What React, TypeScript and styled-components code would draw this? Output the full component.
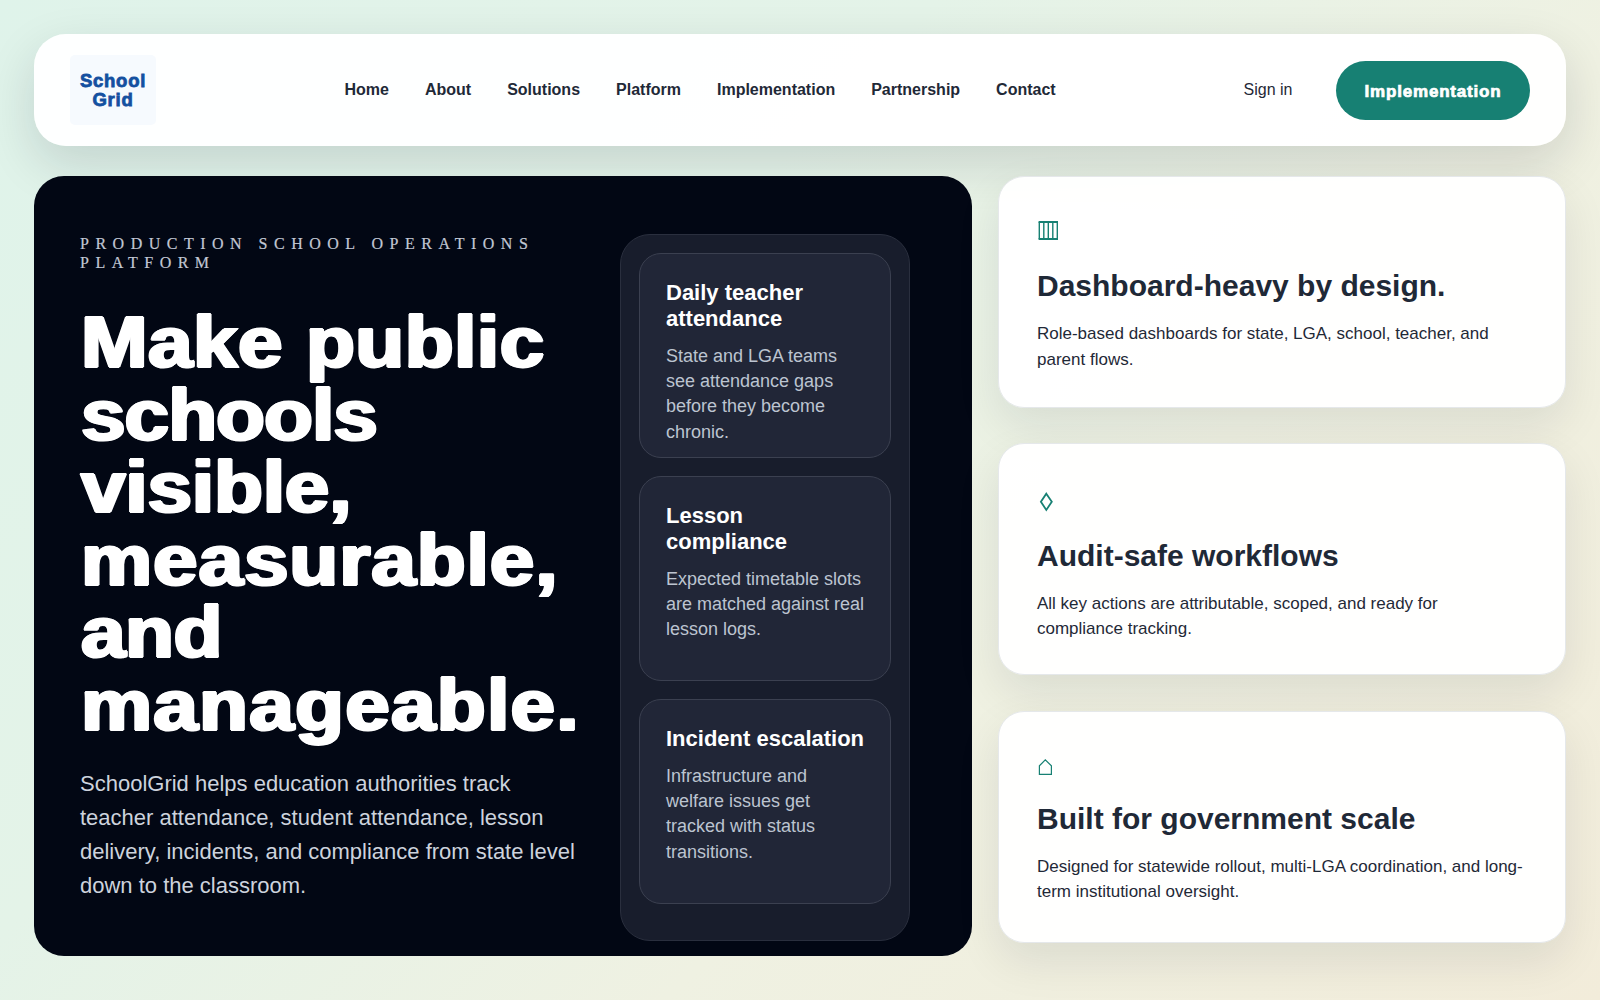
import React from 'react';
import styled, { createGlobalStyle } from 'styled-components';

const sans = '"Liberation Sans", Arial, sans-serif';

const GlobalStyle = createGlobalStyle`
  *, *::before, *::after { box-sizing: border-box; }
  body {
    margin: 0;
    font-family: ${sans};
    color: #1f2937;
  }
  h1, h2, h3, p { margin: 0; }
`;

const Page = styled.div`
  width: 1600px;
  height: 1000px;
  overflow: hidden;
  padding: 34px;
  background: linear-gradient(135deg, #dff3ea 0%, #e4f3e8 36%, #eff1e2 64%, #f2ecda 100%);
`;

const Header = styled.header`
  display: flex;
  align-items: center;
  height: 112px;
  padding: 0 36px;
  border-radius: 32px;
  background: rgba(255, 255, 255, 0.97);
  box-shadow: 0 18px 50px rgba(15, 23, 42, 0.14);
`;

const Logo = styled.a`
  display: flex;
  align-items: center;
  justify-content: center;
  width: 86px;
  height: 70px;
  border-radius: 5px;
  background: #f6fafe;
  color: #1450a0;
  font: 700 18.5px/19px ${sans};
  letter-spacing: 0.75px;
  -webkit-text-stroke: 0.8px #1450a0;
  text-align: center;
`;

const Nav = styled.nav`
  display: flex;
  gap: 36px;
  margin-left: 188.5px;
`;

const NavLink = styled.a`
  font-size: 16px;
  font-weight: 700;
  line-height: 18px;
`;

const SignIn = styled.a`
  margin-left: auto;
  font-size: 16px;
  line-height: 18px;
`;

const CtaButton = styled.a`
  display: flex;
  align-items: center;
  justify-content: center;
  width: 194px;
  height: 59px;
  margin: 1px 0 0 43.5px;
  padding-top: 2px;
  border-radius: 30px;
  background: #178073;
  color: #fff;
  font: 700 17px/20px ${sans};
  letter-spacing: 0.8px;
  -webkit-text-stroke: 0.7px #fff;
`;

const Main = styled.main`
  display: grid;
  grid-template-columns: 938px 568px;
  column-gap: 26px;
  margin-top: 30px;
  height: 780px;
`;

const Hero = styled.section`
  display: flex;
  align-items: flex-start;
  justify-content: space-between;
  padding: 58px 62px 0 46px;
  border-radius: 30px;
  background: #020714;
`;

const HeroCopy = styled.div`
  width: 510px;
`;

const Eyebrow = styled.p`
  width: 480px;
  color: #c2c8d4;
  font: 400 16px/19px "Liberation Serif", "Times New Roman", serif;
  letter-spacing: 6.5px;
  -webkit-text-stroke: 0.2px #c2c8d4;
`;

const Headline = styled.h1`
  margin-top: 34px;
  color: #fff;
  font-size: 72.5px;
  font-weight: 700;
  line-height: 72.6px;
  -webkit-text-stroke: 2px #fff;
  text-shadow: 1.7px 0 #fff, -1.7px 0 #fff;
  transform: scaleX(1.1);
  transform-origin: left top;
`;

const HeadlineLine = styled.span<{ $spacing: number }>`
  display: block;
  padding-left: 1px;
  letter-spacing: ${({ $spacing }) => $spacing}px;
  white-space: nowrap;
`;

const Lead = styled.p`
  margin-top: 25px;
  color: #cdd3dd;
  font-size: 22px;
  line-height: 34px;
  width: 500px;
`;

const Panel = styled.aside`
  display: flex;
  flex-direction: column;
  gap: 18px;
  width: 290px;
  height: 707px;
  padding: 18px;
  border: 1px solid #2a2f3e;
  border-radius: 30px;
  background: #181d2c;
`;

const PanelCard = styled.article`
  height: 205px;
  padding: 26px 24px 0 26px;
  border: 1px solid #3b4050;
  border-radius: 22px;
  background: #212637;
`;

const PanelTitle = styled.h3`
  color: #fff;
  font-size: 22px;
  line-height: 26px;
`;

const PanelText = styled.p`
  margin-top: 12px;
  color: #bcc4d0;
  font-size: 18px;
  line-height: 25.2px;
`;

const Features = styled.div`
  display: flex;
  flex-direction: column;
  gap: 35.4px;
`;

const FeatureCard = styled.article`
  height: 232px;
  padding: 36px 38px 0 38px;
  border: 1px solid #e5e8ea;
  border-radius: 26px;
  background: rgba(255, 255, 255, 0.97);
  box-shadow: 0 18px 45px rgba(15, 23, 42, 0.09);
`;

const IconSlot = styled.div<{ $height: number; $top: number }>`
  height: ${({ $height }) => $height}px;
  padding-top: ${({ $top }) => $top}px;
  color: #178073;
  svg { display: block; }
`;

const FeatureTitle = styled.h2`
  font-size: 30px;
  line-height: 34px;
`;

const FeatureText = styled.p`
  max-width: 488px;
  margin-top: 18px;
  font-size: 17px;
  line-height: 25.5px;
`;

const ColumnsIcon = () => (
  <svg width="22" height="20" viewBox="0 0 22 20" fill="none" stroke="currentColor">
    <path d="M1.6 1h19.4M1.6 18h19.4" strokeWidth="2" />
    <path d="M2.3 1v17M6.8 1v17M11.3 1v17M15.8 1v17M20.3 1v17" strokeWidth="1.4" />
  </svg>
);

const DiamondIcon = () => (
  <svg width="18" height="20" viewBox="0 0 18 20" fill="none" stroke="currentColor" strokeWidth="1.8">
    <path d="M9.3 1.7 14.8 9.8 9.3 17.9 3.9 9.8Z" />
  </svg>
);

const HouseIcon = () => (
  <svg width="18" height="17" viewBox="0 0 18 17" fill="none" stroke="currentColor" strokeWidth="1.2">
    <path d="M2.4 15.4V6.8L8.3 .9l6.1 5.9v8.6Z" />
  </svg>
);

const navItems = ['Home', 'About', 'Solutions', 'Platform', 'Implementation', 'Partnership', 'Contact'];

const headline = [
  { text: 'Make public', spacing: 0.6 },
  { text: 'schools', spacing: -0.7 },
  { text: 'visible,', spacing: 0 },
  { text: 'measurable,', spacing: 1 },
  { text: 'and', spacing: -0.2 },
  { text: 'manageable.', spacing: 1.3 },
];

const panelItems = [
  { title: 'Daily teacher attendance', text: 'State and LGA teams see attendance gaps before they become chronic.' },
  { title: 'Lesson compliance', text: 'Expected timetable slots are matched against real lesson logs.' },
  { title: 'Incident escalation', text: 'Infrastructure and welfare issues get tracked with status transitions.' },
];

const features = [
  {
    icon: <ColumnsIcon />, height: 56, top: 8,
    title: 'Dashboard-heavy by design.',
    text: 'Role-based dashboards for state, LGA, school, teacher, and parent flows.',
  },
  {
    icon: <DiamondIcon />, height: 58.6, top: 12.1,
    title: 'Audit-safe workflows',
    text: 'All key actions are attributable, scoped, and ready for compliance tracking.',
  },
  {
    icon: <HouseIcon />, height: 53.8, top: 11.2,
    title: 'Built for government scale',
    text: 'Designed for statewide rollout, multi-LGA coordination, and long-term institutional oversight.',
  },
];

export default function App() {
  return (
    <Page>
      <GlobalStyle />
      <Header>
        <Logo>School<br />Grid</Logo>
        <Nav>
          {navItems.map((item) => <NavLink key={item}>{item}</NavLink>)}
        </Nav>
        <SignIn>Sign in</SignIn>
        <CtaButton>Implementation</CtaButton>
      </Header>
      <Main>
        <Hero>
          <HeroCopy>
            <Eyebrow>PRODUCTION SCHOOL OPERATIONS PLATFORM</Eyebrow>
            <Headline>
              {headline.map(({ text, spacing }) => (
                <HeadlineLine key={text} $spacing={spacing}>{text}</HeadlineLine>
              ))}
            </Headline>
            <Lead>
              SchoolGrid helps education authorities track teacher attendance, student attendance, lesson
              delivery, incidents, and compliance from state level down to the classroom.
            </Lead>
          </HeroCopy>
          <Panel>
            {panelItems.map(({ title, text }) => (
              <PanelCard key={title}>
                <PanelTitle>{title}</PanelTitle>
                <PanelText>{text}</PanelText>
              </PanelCard>
            ))}
          </Panel>
        </Hero>
        <Features>
          {features.map(({ icon, height, top, title, text }) => (
            <FeatureCard key={title}>
              <IconSlot $height={height} $top={top}>{icon}</IconSlot>
              <FeatureTitle>{title}</FeatureTitle>
              <FeatureText>{text}</FeatureText>
            </FeatureCard>
          ))}
        </Features>
      </Main>
    </Page>
  );
}
